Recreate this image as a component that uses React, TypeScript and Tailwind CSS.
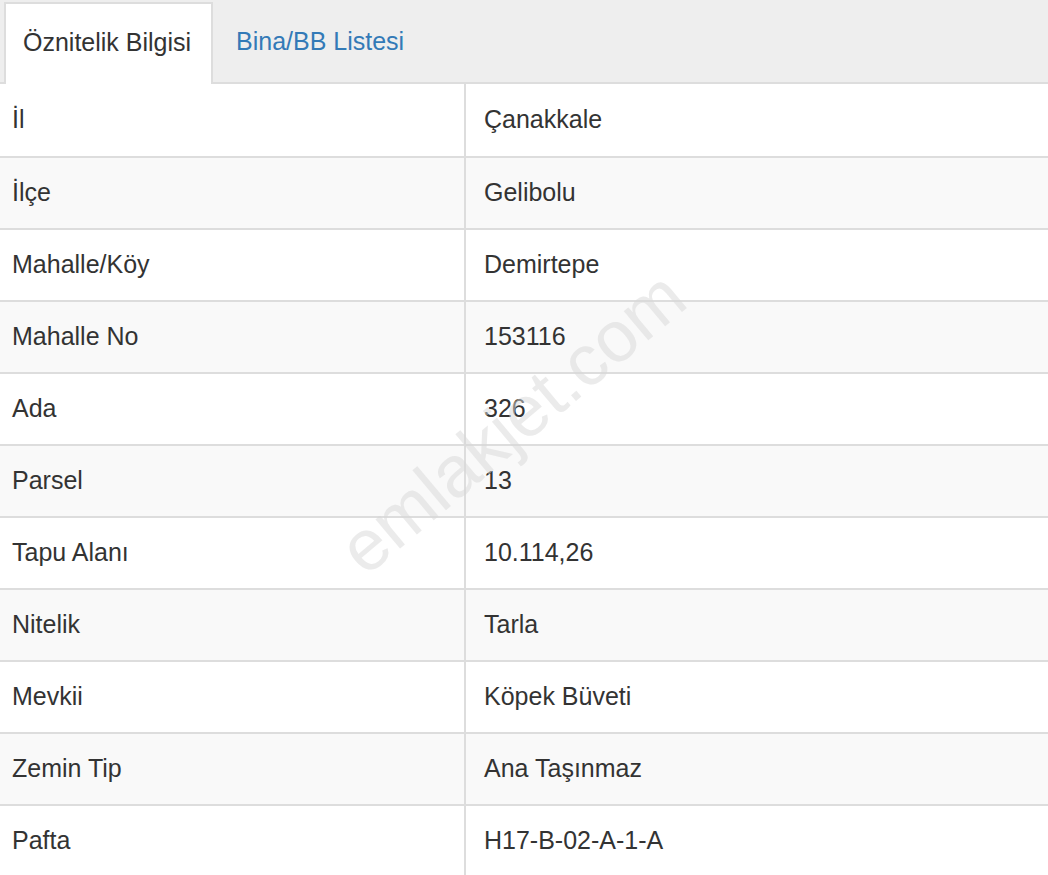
import React from "react";

const rows: [string, string][] = [
  ["İl", "Çanakkale"],
  ["İlçe", "Gelibolu"],
  ["Mahalle/Köy", "Demirtepe"],
  ["Mahalle No", "153116"],
  ["Ada", "326"],
  ["Parsel", "13"],
  ["Tapu Alanı", "10.114,26"],
  ["Nitelik", "Tarla"],
  ["Mevkii", "Köpek Büveti"],
  ["Zemin Tip", "Ana Taşınmaz"],
  ["Pafta", "H17-B-02-A-1-A"],
];

export default function App() {
  return (
    <div
      className="relative w-[1048px] h-[875px] overflow-hidden bg-white text-[#333] text-[25px]"
      style={{ fontFamily: '"Liberation Sans", Arial, sans-serif' }}
    >
      <div className="flex h-[84px] bg-[#eeeeee] border-b-2 border-[#dddddd] pl-[4px] pt-[2px]">
        <div className="w-[209px] h-[84px] bg-white border-2 border-b-0 border-[#dddddd] flex items-center pl-[17px] pb-[4px]">
          Öznitelik Bilgisi
        </div>
        <div className="h-[82px] flex items-center pl-[23px] pb-[2px] text-[#337ab7]">
          Bina/BB Listesi
        </div>
      </div>
      <div className="flex flex-col">
        {rows.map(([k, v], i) => (
          <div
            key={k}
            className={`flex h-[72px] ${i > 0 ? "border-t-2 border-[#dddddd]" : ""} ${
              i % 2 === 1 ? "bg-[#f9f9f9]" : "bg-white"
            }`}
          >
            <div className="w-[466px] shrink-0 flex items-center pl-[12px] border-r-2 border-[#dddddd]">
              {k}
            </div>
            <div className="flex-1 flex items-center pl-[18px]">{v}</div>
          </div>
        ))}
      </div>
      <div className="pointer-events-none absolute left-[512px] top-[422px] -translate-x-1/2 -translate-y-1/2 -rotate-[40deg] text-[72px] text-[#d8d8d8]/50 whitespace-nowrap">
        emlakjet.com
      </div>
    </div>
  );
}
